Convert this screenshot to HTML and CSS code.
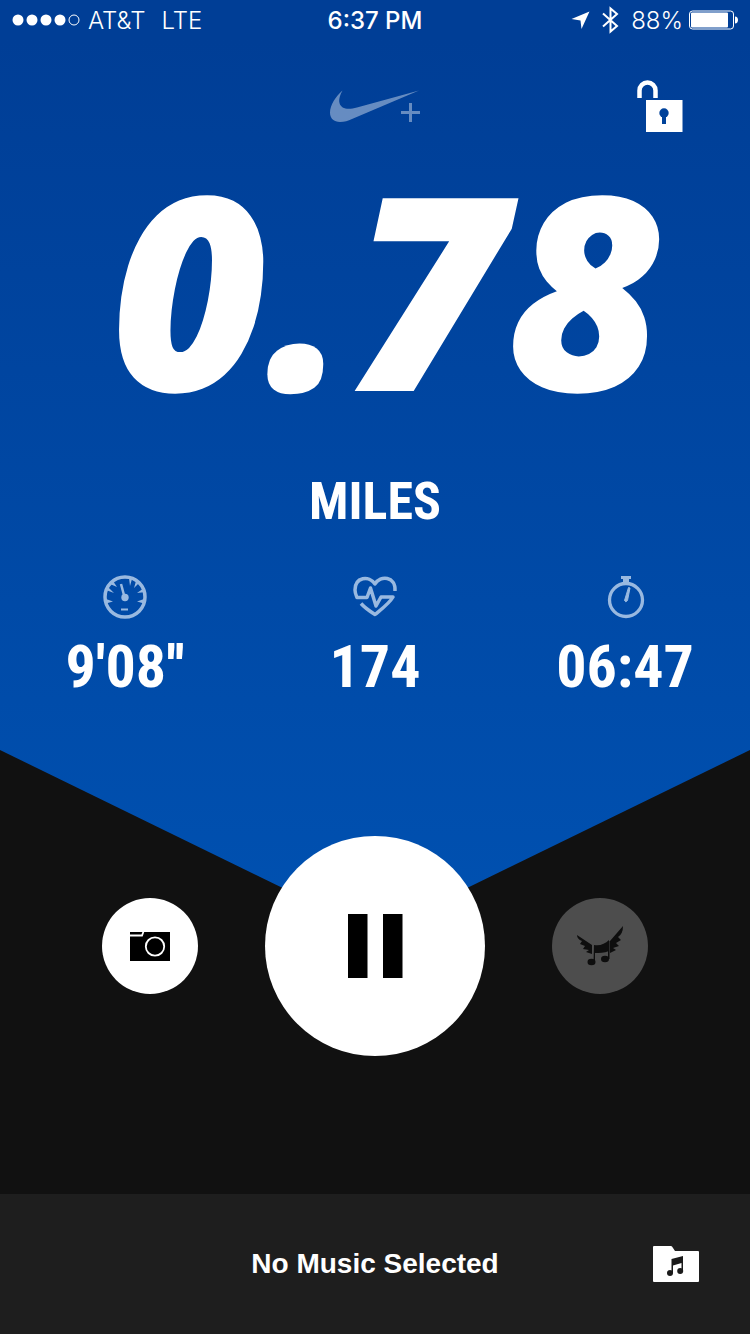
FILE: index.html
```html
<!DOCTYPE html>
<html lang="en">
<head>
    <meta charset="UTF-8">
    <meta name="viewport" content="width=device-width, initial-scale=1.0">
    <title>Run</title>
    <link rel="stylesheet" href="styles.css">
</head>
<body>
    <main class="run">
        <div class="status">
            <div class="carrier">
                <svg width="68" height="12" viewBox="0 0 68 12" fill="#fff">
                    <circle cx="6" cy="6" r="5.5"/><circle cx="20" cy="6" r="5.5"/><circle cx="34" cy="6" r="5.5"/><circle cx="48" cy="6" r="5.5"/>
                    <circle cx="62" cy="6" r="5" fill="none" stroke="#fff"/>
                </svg>
                <span>AT&amp;T</span>
                <span class="network">LTE</span>
            </div>
            <time class="clock">6:37 PM</time>
            <div class="power">
                <svg width="19" height="19" viewBox="0 0 19 19"><path d="M18.500 0.500L10.500 18L9.500 9.500L0.500 8Z" fill="#fff"/></svg>
                <svg class="bluetooth" width="17" height="28" viewBox="0 0 17 28" fill="none" stroke="#fff" stroke-width="2"><path d="M1 7.500L15 20L8.500 25.500V2.500L15 8L1 20.500"/></svg>
                <span>88%</span>
                <svg width="49" height="20" viewBox="0 0 49 20">
                    <rect x="0.500" y="1" width="44" height="18" rx="3" fill="none" stroke="#fff"/>
                    <rect x="2" y="2.500" width="37" height="15" rx="1" fill="#fff"/>
                    <path d="M46 6.500C50 6.500 50 13.500 46 13.500Z" fill="#fff"/>
                </svg>
            </div>
        </div>

        <section class="hero">
            <header class="top">
                <svg class="logo" width="90" height="33" viewBox="20 20 90 33" fill="#fff">
                    <path d="M32.500 20.500C26 26 20 35 20 42.500C20 48.500 24 52 30 52C34.500 52 38 51 42 49L109 20.500L47 37.500C38 40 31 39 29.500 33C28.500 29 30.500 24 32.500 20.500Z"/>
                    <path d="M99 33h3v8h8v3h-8v8h-3v-8h-8v-3h8z"/>
                </svg>
                <button class="lock" aria-label="Lock screen">
                    <svg width="46" height="52" viewBox="0 0 46 52">
                        <path d="M2.500 18V10.500a8 8 0 0 1 16 0V18" fill="none" stroke="#fff" stroke-width="4.500"/>
                        <path d="M10 20h35.500v32H9V20z" fill="#fff"/>
                        <circle cx="27" cy="33" r="4.700" fill="#00429b"/>
                        <path d="M25 35h4v9h-4z" fill="#00429b"/>
                    </svg>
                </button>
            </header>

            <div class="distance">0.78</div>
            <div class="unit">MILES</div>

            <div class="stats">
                <div class="stat">
                    <svg width="44" height="44" viewBox="0 0 44 44" fill="none" stroke="#99b9e0" stroke-width="2">
                        <circle cx="22" cy="22" r="20" stroke-width="3.500"/>
                        <path d="M18 9L21.500 22" stroke-width="2.500"/>
                        <circle cx="22" cy="22.500" r="3.700" fill="#99b9e0" stroke="none"/>
                        <path d="M18 34.500h7"/>
                        <path d="M3 24l7 2.500L3 28.500zM5 12l6 6-8-3zM10 6l4 6-7-3zM26 3l1 8 2-7zM36 8l-5 5 2-7zM41 13l-7 5 9-1zM41 24l-7 2.500 7 2z" fill="#99b9e0" stroke="none"/>
                    </svg>
                    <span class="value">9'08''</span>
                </div>
                <div class="stat">
                    <svg width="44" height="44" viewBox="0 0 44 44" fill="none" stroke="#99b9e0" stroke-width="3.500" stroke-linejoin="round">
                        <path d="M42 16C43 1 27 0 22 9C16 0 2 2 2 15C2 18 3 20 4 22.500H14L17.500 13L23 31L28 22H40C36 29 26 36 22 39.500C18 37 12 33 8 28.500"/>
                    </svg>
                    <span class="value">174</span>
                </div>
                <div class="stat">
                    <svg width="44" height="44" viewBox="0 0 44 44" fill="none" stroke="#99b9e0">
                        <circle cx="23" cy="25" r="16.500" stroke-width="3.300"/>
                        <path d="M18 1h10v3h-2v4h-6V4h-2z" fill="#99b9e0" stroke="none"/>
                        <path d="M25.500 12.500L27 13L24.500 25.500Q22.500 28 21.500 25.500Z" fill="#99b9e0"/>
                    </svg>
                    <span class="value">06:47</span>
                </div>
            </div>
        </section>

        <div class="controls">
            <button class="round" aria-label="Camera">
                <svg width="40" height="30" viewBox="0 0 40 30">
                    <path d="M0 1h40v29H0z"/>
                    <path d="M0 4.500h12l1.500-4" fill="none" stroke="#fff" stroke-width="1.800"/>
                    <circle cx="25" cy="15.500" r="9.200" fill="none" stroke="#fff" stroke-width="1.800"/>
                </svg>
            </button>
            <button class="round pause" aria-label="Pause">
                <svg width="55" height="64" viewBox="0 0 55 64"><path d="M0 0h19.500v64H0zM35 0h19.500v64H35z"/></svg>
            </button>
            <button class="round powersong" aria-label="Power song">
                <svg width="48" height="42" viewBox="0 0 48 42" fill="#0e0e0e">
                    <path d="M1 10L16 20V29L10 27L13 25L7 24L9 21L4 19L6 16Q1 14 1 10Z"/>
                    <path d="M47 1L34 16V28L40 25L37 23L43 21L40 18L45 15L42 12Q47 9 47 1Z"/>
                    <path d="M18 20C24 21 29 19 33 15V26C28 28 23 28 19 28V38h-1.500z"/>
                    <path d="M32 16h1.500v18H32z"/>
                    <ellipse cx="15.500" cy="37" rx="4" ry="3.200"/>
                    <ellipse cx="29" cy="34" rx="4" ry="3.200"/>
                </svg>
            </button>
        </div>

        <footer class="music">
            <span class="track">No Music Selected</span>
            <button class="library" aria-label="Choose music">
                <svg width="46" height="36" viewBox="0 0 46 36">
                    <path d="M0 1Q0 0 1 0H18Q19 0 20 2L22 5H45Q46 5 46 6V35Q46 36 45 36H1Q0 36 0 35Z" fill="#fff"/>
                    <path d="M18.500 13L30 10V25h-1.500V17L20 19.500V27h-1.500z" fill="#1a1a1a"/>
                    <circle cx="17" cy="27" r="3" fill="#1a1a1a"/><circle cx="27.200" cy="25" r="3" fill="#1a1a1a"/>
                </svg>
            </button>
        </footer>
    </main>
</body>
</html>
```
FILE: styles.css
```css
* { box-sizing: border-box; }
body { margin: 0; background: #111; color: #fff; font-family: Inter, sans-serif; }
svg { display: block; overflow: visible; flex: none; }
button { display: flex; align-items: center; justify-content: center; padding: 0; border: none; background: none; cursor: pointer; }

.run { display: flex; flex-direction: column; min-height: 100vh; }

.status { display: grid; grid-template-columns: 1fr auto 1fr; align-items: center; height: 40px; padding: 0 12px; background: #003e96; font-size: 24px; font-weight: 300; }
.carrier, .power { display: flex; align-items: center; gap: 8px; }
.network { margin-left: 8px; }
.clock { font-weight: 500; }
.power { justify-content: flex-end; gap: 6px; }
.bluetooth { margin: 0 6px; }

/* blue panel ends in a downward point */
.hero { padding-bottom: 234px; background: linear-gradient(#003e96, #0051b1); clip-path: polygon(0 0, 100% 0, 100% calc(100% - 183px), 50% 100%, 0 calc(100% - 183px)); }
.top { display: grid; grid-template-columns: 1fr auto 1fr; padding: 40px 67px 0; }
.logo { grid-column: 2; margin-top: 10px; opacity: 0.4; }
.lock { justify-self: end; }
.distance { margin-top: 34px; padding-left: 24px; font-family: "Open Sans", sans-serif; font-size: 270px; font-weight: 800; font-style: italic; line-height: 240px; text-align: center; }
.unit { margin-top: 64px; font-family: "Roboto Condensed", sans-serif; font-size: 52px; font-weight: 700; line-height: 64px; text-align: center; }

.stats { display: grid; grid-template-columns: repeat(3, 1fr); margin-top: 41px; }
.stat { display: flex; flex-direction: column; align-items: center; gap: 16px; }
.value { font-family: "Roboto Condensed", sans-serif; font-size: 60px; font-weight: 700; line-height: 64px; }

.controls { display: flex; align-items: center; justify-content: center; gap: 67px; margin-top: -97px; z-index: 1; }
.round { width: 96px; height: 96px; border-radius: 50%; background: #fff; }
.pause { width: 220px; height: 220px; }
.powersong { background: #4d4d4d; }

.music { display: grid; grid-template-columns: 1fr auto 1fr; align-items: center; height: 140px; margin-top: auto; padding: 0 51px; background: #1e1e1e; }
.track { grid-column: 2; font-family: "Liberation Sans", sans-serif; font-size: 28px; font-weight: 700; }
.library { justify-self: end; }
```
